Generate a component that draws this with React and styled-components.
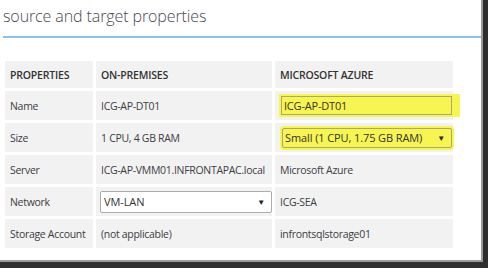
import React from "react";
import styled, { createGlobalStyle } from "styled-components";

const GlobalStyle = createGlobalStyle`
  html, body { margin: 0; padding: 0; background: #2e2e2e; overflow: hidden; }
  body { font-family: "Open Sans", "Noto Sans", sans-serif; }
`;

const Frame = styled.div`
  width: 100vw;
  height: 100vh;
  background: #2e2e2e;
  display: flex;
  align-items: flex-start;
`;

const Panel = styled.div`
  width: calc(100vw - 5px);
  height: calc(100vh - 6px);
  flex: none;
  background: #fff;
  box-sizing: border-box;
  border-right: 2px solid #9a9a9a;
  border-bottom: 2px solid #9a9a9a;
  display: flex;
  flex-direction: column;
`;

const Title = styled.h1`
  margin: 0;
  padding: 6px 0 0 3px;
  height: 32px;
  box-sizing: border-box;
  font-family: "Open Sans", sans-serif;
  font-weight: 300;
  font-size: 16px;
  line-height: 20px;
  color: #4a4750;
  letter-spacing: -0.1px;
`;

const Divider = styled.div`
  height: 2px;
  margin-left: 3px;
  margin-top: 4px;
  background: #8ec0ef;
`;

const Grid = styled.div`
  margin: 23px 0 0 5px;
  display: grid;
  grid-template-columns: 88px 176px 178px;
  grid-template-rows: 27px repeat(5, 29px);
  gap: 3px;
`;

const Cell = styled.div`
  background: #f2f2f2;
  display: flex;
  align-items: center;
  padding-left: ${(p) => (p.$pad ?? 5)}px;
  font-family: "Open Sans", sans-serif;
  font-size: 10.5px;
  color: ${(p) => (p.$head ? "#333" : "#3e3c44")};
  font-weight: ${(p) => (p.$head ? 600 : 400)};
  text-transform: ${(p) => (p.$head ? "uppercase" : "none")};
  letter-spacing: ${(p) => (p.$head ? "-0.2px" : "-0.3px")};
  white-space: nowrap;
`;

const TextInput = styled.div`
  width: 171px;
  height: 19px;
  box-sizing: border-box;
  border: 1px solid #aaa86e;
  background: #f6f552;
  box-shadow: 0 0 0 2px #f6f552, 6px 0 0 2px #f6f552;
  display: flex;
  align-items: center;
  padding-left: 2px;
  font-family: "Open Sans", sans-serif;
  font-size: 11px;
  letter-spacing: -0.2px;
  color: #3a2f2a;
`;

const SelectBox = styled.div`
  width: ${(p) => p.$w}px;
  height: ${(p) => p.$h}px;
  box-sizing: border-box;
  border: 1px solid ${(p) => (p.$hl ? "#aaa86e" : "#ababab")};
  border-radius: 2px;
  background: ${(p) => (p.$hl ? "#f6f552" : "#fff")};
  box-shadow: ${(p) => (p.$hl ? "0 0 0 2px #f6f552" : "none")};
  display: flex;
  align-items: center;
  justify-content: space-between;
  padding: 0 6px 0 ${(p) => (p.$hl ? 2 : 3)}px;
  font-family: "Open Sans", sans-serif;
  font-size: 11px;
  letter-spacing: -0.1px;
  color: #333;
`;

const Arrow = styled.span`
  font-size: 8px;
  color: #222;
`;

const rows = [
  ["Name", "ICG-AP-DT01", { type: "input", value: "ICG-AP-DT01" }],
  ["Size", "1 CPU, 4 GB RAM", { type: "select", value: "Small (1 CPU, 1.75 GB RAM)" }],
  ["Server", "ICG-AP-VMM01.INFRONTAPAC.local", { type: "text", value: "Microsoft Azure" }],
  ["Network", { type: "select", value: "VM-LAN" }, { type: "text", value: "ICG-SEA" }],
  ["Storage Account", "(not applicable)", { type: "text", value: "infrontsqlstorage01" }],
];

function renderValue(v, col) {
  if (typeof v === "string") return <Cell>{v}</Cell>;
  if (v.type === "text") return <Cell>{v.value}</Cell>;
  if (v.type === "input")
    return (
      <Cell $pad={6}>
        <TextInput>{v.value}</TextInput>
      </Cell>
    );
  if (v.type === "select") {
    const hl = col === 2;
    return (
      <Cell $pad={hl ? 7 : 4}>
        <SelectBox $hl={hl} $w={hl ? 170 : 172} $h={hl ? 20 : 22}>
          <span>{v.value}</span>
          <Arrow>▼</Arrow>
        </SelectBox>
      </Cell>
    );
  }
  return null;
}

export default function App() {
  return (
    <>
      <GlobalStyle />
      <Frame>
        <Panel>
          <Title>source and target properties</Title>
          <Divider />
          <Grid>
            <Cell $head>Properties</Cell>
            <Cell $head>On-premises</Cell>
            <Cell $head>Microsoft Azure</Cell>
            {rows.map((r) => (
              <React.Fragment key={r[0]}>
                <Cell>{r[0]}</Cell>
                {renderValue(r[1], 1)}
                {renderValue(r[2], 2)}
              </React.Fragment>
            ))}
          </Grid>
        </Panel>
      </Frame>
    </>
  );
}
